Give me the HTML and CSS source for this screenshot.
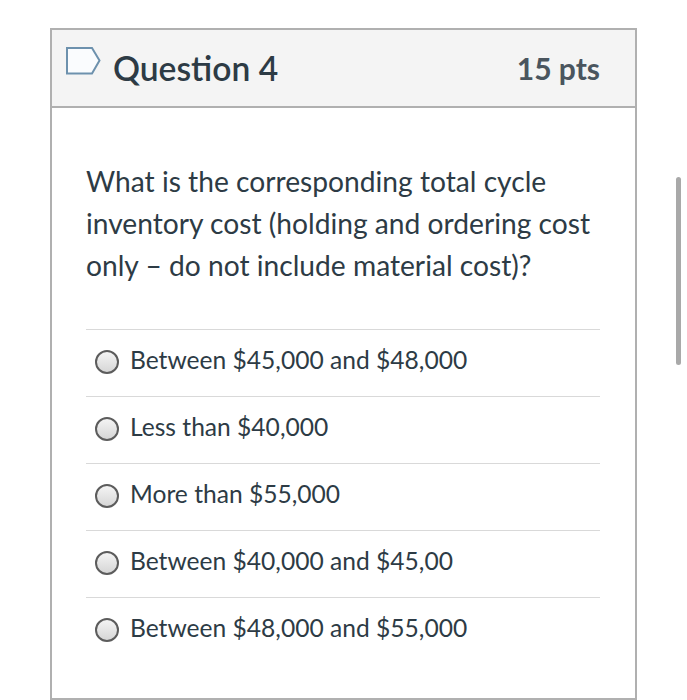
FILE: index.html
```html
<!DOCTYPE html>
<html lang="en">
<head>
    <meta charset="UTF-8">
    <meta name="viewport" content="width=device-width, initial-scale=1.0">
    <title>Question 4</title>
    <link rel="stylesheet" href="styles.css">
</head>
<body>
    <div class="question">
        <div class="question-header">
            <svg class="flag" width="38" height="30" viewBox="0 0 38 30">
                <path d="M2 3H27L34.5 15.5L27 28.5H2Z" fill="#fafcfe" stroke="#6d91ad" stroke-width="2"/>
            </svg>
            <h2>Question 4</h2>
            <div class="pts">15 pts</div>
        </div>
        <div class="question-body">
            <p class="question-text">What is the corresponding total cycle inventory cost (holding and ordering cost only &ndash; do not include material cost)?</p>
            <div class="answers">
                <div class="answer"><span class="radio"></span><span class="answer-text">Between $45,000 and $48,000</span></div>
                <div class="answer"><span class="radio"></span><span class="answer-text">Less than $40,000</span></div>
                <div class="answer"><span class="radio"></span><span class="answer-text">More than $55,000</span></div>
                <div class="answer"><span class="radio"></span><span class="answer-text">Between $40,000 and $45,00</span></div>
                <div class="answer"><span class="radio"></span><span class="answer-text">Between $48,000 and $55,000</span></div>
            </div>
        </div>
    </div>
    <div class="scrollbar"></div>
</body>
</html>
```

FILE: styles.css
```css
html, body {
    height: 700px;
    overflow: hidden;
}

body {
    margin: 0;
    padding: 28px 50px 0;
    box-sizing: border-box;
    background-color: #fff;
    color: #2d3b45;
    font-family: "Lato", sans-serif;
    font-feature-settings: "liga" 1;
}

.question {
    width: 587px;
    height: 672px;
    box-sizing: border-box;
    border: 2px solid #b0b0b0;
}

.question-header {
    display: flex;
    align-items: center;
    height: 76px;
    padding: 0 35px 0 13px;
    background-color: #f4f4f4;
    border-bottom: 2px solid #b0b0b0;
}

.flag {
    margin: -17px 10px 0 0;
}

.question-header h2 {
    flex: 1;
    margin: 0;
    font-size: 33.6px;
    font-weight: 600;
}

.pts {
    font-size: 30px;
    font-weight: 700;
    color: #4a555e;
}

.question-body {
    padding: 52px 35px 0 34px;
}

.question-text {
    margin: 0 0 43px;
    font-size: 28.2px;
    line-height: 42px;
}

.answer {
    display: flex;
    align-items: center;
    height: 63px;
    padding: 0 0 3px 9px;
    border-top: 1px solid #d9d9d9;
    font-size: 24.6px;
}

.answer-text {
    margin-bottom: 5px;
}

.radio {
    width: 20px;
    height: 20px;
    margin-right: 11px;
    border: 2px solid #5c5c5c;
    border-radius: 50%;
    background: linear-gradient(#f4f4f4, #d6d6d6);
}

.scrollbar {
    position: absolute;
    left: 676px;
    top: 177px;
    width: 5px;
    height: 188px;
    border-radius: 3px;
    background-color: #a9a9a9;
}
```
